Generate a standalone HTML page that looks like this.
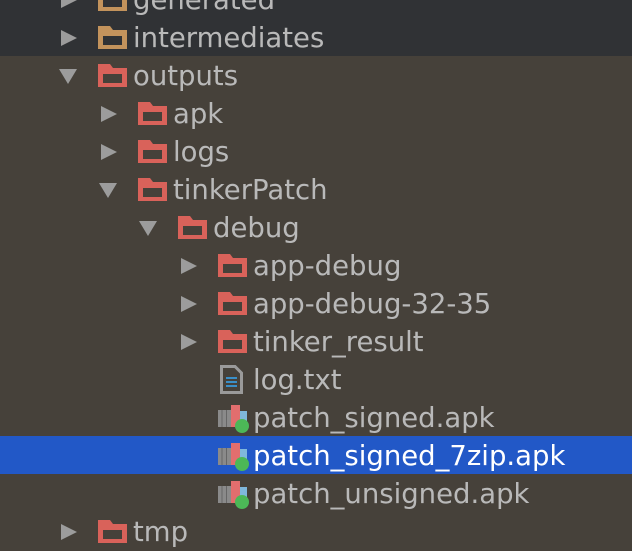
<!DOCTYPE html>
<html><head><meta charset="utf-8"><style>
body{margin:0;width:632px;height:534px;overflow:hidden;background:#46413a;font-family:"DejaVu Sans","Liberation Sans",sans-serif;position:relative}
.top{position:absolute;left:0;top:0;width:632px;height:56px;background:#303235}
.row{position:absolute;left:0;width:632px;height:38px}
.sel{background:#2258c7}
.t{position:absolute;top:1px;line-height:38px;font-size:27.5px;color:#b9b9b9;white-space:nowrap}
.sel .t{color:#fff}
svg{position:absolute}
</style></head><body>
<div class="top"></div>
<div id="tree"></div>
<script>
var rows=[
[0,'c','o','generated'],[0,'c','o','intermediates'],[0,'e','r','outputs'],
[1,'c','r','apk'],[1,'c','r','logs'],[1,'e','r','tinkerPatch'],[2,'e','r','debug'],
[3,'c','r','app-debug'],[3,'c','r','app-debug-32-35'],[3,'c','r','tinker_result'],
[3,'','t','log.txt'],[3,'','a','patch_signed.apk'],[3,'','a','patch_signed_7zip.apk',1],
[3,'','a','patch_unsigned.apk'],[0,'c','r','tmp']];
var h='';
rows.forEach(function(r,i){
 var top=38*i-20, x=40*r[0];
 h+='<div class="row'+(r[4]?' sel':'')+'" style="top:'+top+'px">';
 if(r[1]=='c')h+='<svg style="left:'+(60+x)+'px;top:11px" width="18" height="18"><path d="M1 1L17 9L1 17Z" fill="#9c9c9c"/></svg>';
 if(r[1]=='e')h+='<svg style="left:'+(58+x)+'px;top:12px" width="20" height="16"><path d="M1 1L19 1L10 16Z" fill="#9c9c9c"/></svg>';
 var ix=98+x;
 if(r[2]=='o'||r[2]=='r'){var c=r[2]=='o'?'#c3935c':'#d9625a';
  h+='<svg style="left:'+ix+'px;top:8px" width="29" height="23"><path d="M0 0H12L15 4H29V23H0Z M5 10V19H24V10Z" fill="'+c+'" fill-rule="evenodd"/></svg>';}
 if(r[2]=='t')h+='<svg style="left:'+(ix+2)+'px;top:5px" width="24" height="29"><path d="M1.5 1.5H15L21.5 8V27.5H1.5Z" fill="none" stroke="#9a9a9a" stroke-width="3"/><path d="M6 13H17M6 17H17M6 21H17" stroke="#3a8fc8" stroke-width="2"/></svg>';
 if(r[2]=='a')h+='<svg style="left:'+ix+'px;top:4px" width="34" height="32"><rect x="0" y="8" width="13" height="17" fill="#8a8a8a"/><path d="M4 8V25M8.5 8V25" stroke="#666" stroke-width="1"/><rect x="13" y="3" width="9" height="22" fill="#e26e6e"/><rect x="22" y="9" width="7" height="16" fill="#7fb8dc"/><circle cx="24" cy="24" r="7" fill="#4cb857"/></svg>';
 h+='<div class="t" style="left:'+(133+x)+'px">'+r[3]+'</div></div>';
});
document.getElementById('tree').innerHTML=h;
</script>
</body></html>
